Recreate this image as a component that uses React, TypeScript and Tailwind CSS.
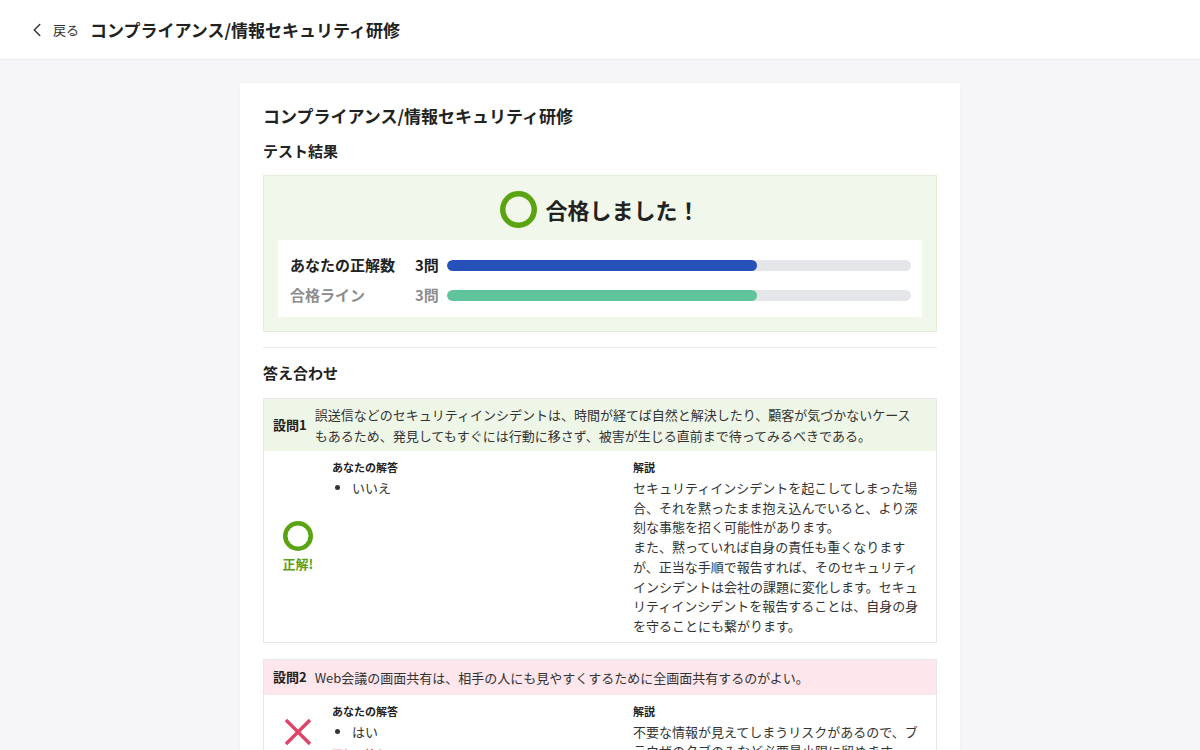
import { ChevronLeft } from 'lucide-react'

const FONT = { fontFamily: '"Noto Sans CJK JP", "Noto Sans", sans-serif' }

type Question = {
  no: number
  text: string
  correct: boolean
  answer: string
  rightAnswer?: string
  explanation: string[]
}

const questions: Question[] = [
  {
    no: 1,
    text: '誤送信などのセキュリティインシデントは、時間が経てば自然と解決したり、顧客が気づかないケースもあるため、発見してもすぐには行動に移さず、被害が生じる直前まで待ってみるべきである。',
    correct: true,
    answer: 'いいえ',
    explanation: [
      'セキュリティインシデントを起こしてしまった場合、それを黙ったまま抱え込んでいると、より深刻な事態を招く可能性があります。',
      'また、黙っていれば自身の責任も重くなりますが、正当な手順で報告すれば、そのセキュリティインシデントは会社の課題に変化します。セキュリティインシデントを報告することは、自身の身を守ることにも繋がります。',
    ],
  },
  {
    no: 2,
    text: 'Web会議の画面共有は、相手の人にも見やすくするために全画面共有するのがよい。',
    correct: false,
    answer: 'はい',
    rightAnswer: 'いいえ',
    explanation: ['不要な情報が見えてしまうリスクがあるので、ブラウザのタブのみなど必要最小限に留めます。'],
  },
]

function Ring({ size, stroke }: { size: number; stroke: number }) {
  const r = (size - stroke) / 2
  return (
    <svg width={size} height={size} viewBox={`0 0 ${size} ${size}`}>
      <circle cx={size / 2} cy={size / 2} r={r} fill="none" stroke="#5aa412" strokeWidth={stroke} />
    </svg>
  )
}

function Cross() {
  return (
    <svg width="28" height="28" viewBox="0 0 28 28">
      <path d="M2 2 L26 26 M26 2 L2 26" stroke="#df4468" strokeWidth="3.4" strokeLinecap="butt" />
    </svg>
  )
}

function ScoreRow({ label, value, pct, muted, color }: { label: string; value: string; pct: number; muted?: boolean; color: string }) {
  return (
    <div className="flex items-center h-[22px]">
      <span className={`w-[125px] text-[15px] font-bold ${muted ? 'text-[#8c8c8c]' : 'text-[#222]'}`}>{label}</span>
      <span className={`w-[32px] text-[15px] font-bold ${muted ? 'text-[#8c8c8c]' : 'text-[#222]'}`}>{value}</span>
      <div className="flex-1 h-[11px] rounded-full bg-[#e4e6ea] overflow-hidden">
        <div className="h-full rounded-full" style={{ width: `${pct}%`, background: color }} />
      </div>
    </div>
  )
}

function QuestionBlock({ q }: { q: Question }) {
  return (
    <div className="border border-[#e6e8ec]">
      <div className={`flex items-center min-h-[35px] py-[5px] pl-[9px] pr-[14px] ${q.correct ? 'bg-[#eef6e7]' : 'bg-[#fde6ec]'}`}>
        <span className="shrink-0 text-[13px] font-bold text-[#222] mr-2">設問{q.no}</span>
        <p className="text-[13px] leading-[21px] text-[#333]">{q.text}</p>
      </div>
      <div className="flex bg-white pl-[19px] pr-[15px] pt-[8px] pb-[6px]">
        <div className="flex flex-col items-center justify-center w-[30px] shrink-0">
          {q.correct ? <Ring size={30} stroke={4.5} /> : <Cross />}
          <span className={`mt-[3px] text-[13px] font-bold whitespace-nowrap ${q.correct ? 'text-[#5a9e1a]' : 'text-[#df4468]'}`}>
            {q.correct ? '正解!' : '不正解'}
          </span>
        </div>
        <div className="flex-1 pl-[19px]">
          <div className="text-[11px] font-bold text-[#222] leading-[16px]">あなたの解答</div>
          <ul className="list-disc pl-5 mt-[3px] text-[13px] leading-[20px] text-[#333]">
            <li>{q.answer}</li>
          </ul>
          {q.rightAnswer && (
            <>
              <div className="text-[11px] font-bold text-[#df4468] leading-[16px] mt-[4px]">正しい答え</div>
              <ul className="list-disc pl-5 mt-[3px] text-[13px] leading-[20px] text-[#333]">
                <li>{q.rightAnswer}</li>
              </ul>
            </>
          )}
        </div>
        <div className="w-[288px] shrink-0">
          <div className="text-[11px] font-bold text-[#222] leading-[16px]">解説</div>
          <div className="mt-[3px] text-[13px] leading-[19.7px] text-[#333]">
            {q.explanation.map((t, i) => (
              <p key={i}>{t}</p>
            ))}
          </div>
        </div>
      </div>
    </div>
  )
}

export default function App() {
  return (
    <div className="min-h-screen bg-[#f6f6f9]" style={FONT}>
      {/* Header */}
      <header className="h-[60px] bg-white border-b border-[#ebebef] flex items-center pl-[26px]">
        <ChevronLeft size={22} strokeWidth={1.6} className="text-[#333]" />
        <span className="ml-[5px] text-[13px] text-[#333]">戻る</span>
        <h1 className="ml-[11px] text-[17px] font-bold text-[#222]">コンプライアンス/情報セキュリティ研修</h1>
      </header>

      <main className="flex justify-center pt-[23px]">
        <div className="w-[720px] bg-white px-[23px] pt-[20px] pb-8 shadow-[0_0_4px_rgba(0,0,0,0.03)]">
          <h2 className="text-[17px] font-bold text-[#222] leading-[25px]">コンプライアンス/情報セキュリティ研修</h2>
          <h3 className="mt-[12px] text-[15px] font-bold text-[#222] leading-[22px]">テスト結果</h3>

          {/* Result */}
          <div className="mt-[13px] bg-[#f1f8eb] border border-[#e2eed9] px-[14px] pt-[15px] pb-[14px]">
            <div className="flex items-center justify-center gap-[8px]">
              <Ring size={37} stroke={5.5} />
              <span className="text-[22px] font-bold text-[#222] leading-[37px]">合格しました！</span>
            </div>
            <div className="mt-[12px] bg-white pl-[12px] pr-[11px] pt-[14px] pb-[11px] flex flex-col gap-[8px]">
              <ScoreRow label="あなたの正解数" value="3問" pct={66.8} color="#2651b9" />
              <ScoreRow label="合格ライン" value="3問" pct={66.8} color="#5fc49c" muted />
            </div>
          </div>

          <div className="mt-[15px] h-px bg-[#e8edf3]" />

          <h3 className="mt-[14px] text-[15px] font-bold text-[#222] leading-[22px]">答え合わせ</h3>

          <div className="mt-[14px] flex flex-col gap-4">
            {questions.map(q => (
              <QuestionBlock key={q.no} q={q} />
            ))}
          </div>
        </div>
      </main>
    </div>
  )
}
